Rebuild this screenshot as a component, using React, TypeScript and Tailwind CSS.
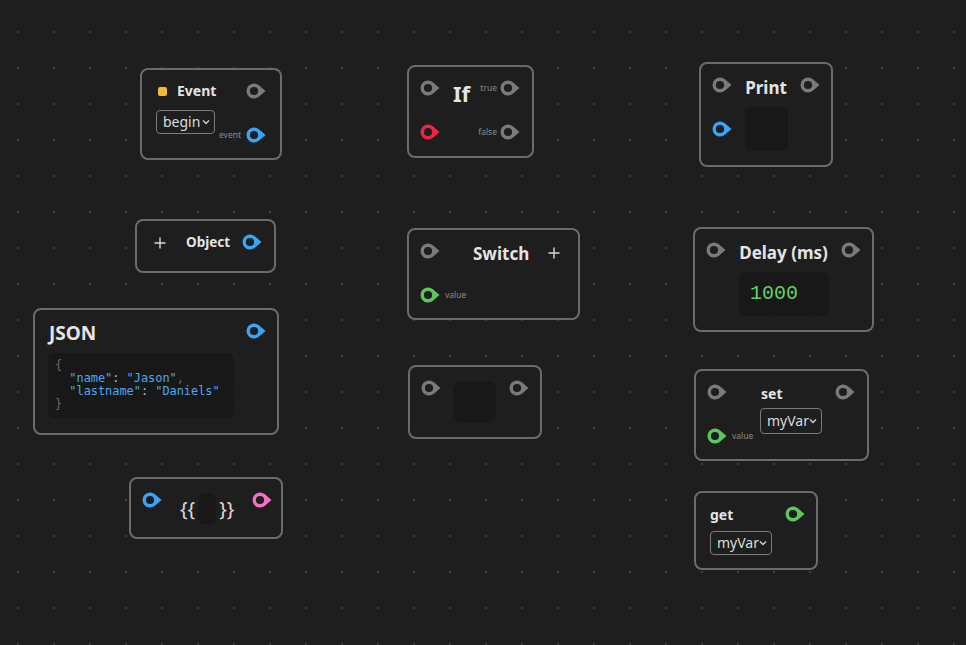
import React from "react";

const GREY = "#7a7a7a";
const BLUE = "#36a6f6";
const RED = "#f1234b";
const GREEN = "#5cc85c";
const PINK = "#f472c4";

const Port = ({ c }: { c: string }) => (
  <svg width="20" height="16" viewBox="0 0 20 16" className="block shrink-0">
    <path
      fillRule="evenodd"
      fill={c}
      d="M19.5 8 L12.9 2.3 A7.5 7.5 0 1 0 12.9 13.7 Z M8 3.9 A4.1 4.1 0 1 1 8 12.1 A4.1 4.1 0 1 1 8 3.9 Z"
    />
  </svg>
);

const Plus = () => (
  <svg width="12" height="12" viewBox="0 0 12 12" className="block shrink-0">
    <path d="M6 0.5 V11.5 M0.5 6 H11.5" stroke="#d8d8d8" strokeWidth="1.4" />
  </svg>
);

const Chevron = () => (
  <svg width="8" height="6" viewBox="0 0 8 6" className="block shrink-0">
    <path d="M1 1.5 L4 4.5 L7 1.5" stroke="#d0d0d0" strokeWidth="1.4" fill="none" />
  </svg>
);

const Select = ({ label, w, h }: { label: string; w: string; h: string }) => (
  <div
    className={`flex items-center justify-between rounded-[4px] border-[1.5px] border-[#7a7a7a] pl-[6px] pr-[4px] text-[14px] text-[#dcdcdc] ${w} ${h}`}
  >
    <span className="leading-none">{label}</span>
    <Chevron />
  </div>
);

const Label = ({ t }: { t: string }) => (
  <span className="text-[8.5px] leading-none text-[#8a8a8a]">{t}</span>
);

const node =
  "absolute box-border rounded-[8px] border-2 border-[#6b6b6b] bg-[#1e1e1e]/70";

export default function App() {
  return (
    <div
      className="relative h-[645px] w-[966px] overflow-hidden bg-[#1e1e1e] bg-[radial-gradient(circle,#3d3d3d_1px,transparent_1.6px)] bg-[size:36px_36px] bg-[position:0px_14px] text-[#e4e4e4]"
      style={{ fontFamily: '"Noto Sans", "Open Sans", sans-serif' }}
    >
      {/* Event */}
      <div className={`${node} left-[140px] top-[68px] h-[92px] w-[142px] px-[14px] pt-[12px]`}>
        <div className="flex h-[18px] items-center justify-between">
          <div className="flex items-center">
            <div className="ml-[2px] h-[9px] w-[9px] rounded-[2px] bg-[#f8b932]" />
            <span className="ml-[10px] text-[14px] font-bold leading-none">Event</span>
          </div>
          <Port c={GREY} />
        </div>
        <div className="mt-[10px] flex items-start justify-between">
          <Select label="begin" w="w-[59px]" h="h-[24px]" />
          <div className="mt-[17px] flex items-center gap-[5px]">
            <Label t="event" />
            <Port c={BLUE} />
          </div>
        </div>
      </div>

      {/* If */}
      <div className={`${node} left-[407px] top-[65px] h-[93px] w-[127px] pl-[11px] pr-[12px] pt-[13px]`}>
        <div className="flex h-[16px] items-center justify-between">
          <div className="flex items-center">
            <Port c={GREY} />
            <span className="ml-[13px] mt-[9px] text-[22px] font-bold leading-none">If</span>
          </div>
          <div className="flex items-center gap-[3px]">
            <Label t="true" />
            <Port c={GREY} />
          </div>
        </div>
        <div className="mt-[28px] flex h-[16px] items-center justify-between">
          <Port c={RED} />
          <div className="flex items-center gap-[3px]">
            <Label t="false" />
            <Port c={GREY} />
          </div>
        </div>
      </div>

      {/* Print */}
      <div className={`${node} left-[699px] top-[62px] h-[105px] w-[134px] pl-[11px] pr-[11px] pt-[13px]`}>
        <div className="flex h-[16px] items-center justify-between">
          <Port c={GREY} />
          <span className="mt-[4px] text-[17px] font-bold leading-none">Print</span>
          <Port c={GREY} />
        </div>
        <div className="mt-[14px] flex items-center">
          <Port c={BLUE} />
          <div className="ml-[13px] h-[44px] w-[43px] rounded-[6px] bg-[#181818]" />
        </div>
      </div>

      {/* Object */}
      <div className={`${node} left-[135px] top-[219px] h-[54px] w-[141px] pl-[17px] pt-[13px]`}>
        <div className="flex h-[16px] items-center">
          <div className="mt-[2px]">
            <Plus />
          </div>
          <span className="ml-[20px] mt-[2px] text-[13.5px] font-bold leading-none">Object</span>
          <div className="ml-[12px]">
            <Port c={BLUE} />
          </div>
        </div>
      </div>

      {/* Switch */}
      <div className={`${node} left-[407px] top-[228px] h-[92px] w-[173px] pl-[11px] pt-[13px]`}>
        <div className="flex h-[16px] items-center">
          <Port c={GREY} />
          <span className="ml-[33px] mt-[5px] text-[17px] font-bold leading-none">Switch</span>
          <div className="ml-[19px] mt-[4px]">
            <Plus />
          </div>
        </div>
        <div className="mt-[28px] flex h-[16px] items-center gap-[5px]">
          <Port c={GREEN} />
          <Label t="value" />
        </div>
      </div>

      {/* Delay */}
      <div className={`${node} left-[693px] top-[227px] h-[105px] w-[181px] pl-[11px] pr-[11px] pt-[13px]`}>
        <div className="flex h-[16px] items-center justify-between">
          <Port c={GREY} />
          <span className="mt-[5px] text-[17px] font-bold leading-none">Delay (ms)</span>
          <Port c={GREY} />
        </div>
        <div
          className="ml-[33px] mt-[14px] flex h-[44px] w-[90px] items-center rounded-[6px] bg-[#181818] pl-[11px] text-[20px] text-[#62d362]"
          style={{ fontFamily: '"Liberation Mono", "DejaVu Sans Mono", monospace' }}
        >
          1000
        </div>
      </div>

      {/* JSON */}
      <div className={`${node} left-[33px] top-[308px] h-[127px] w-[246px] pl-[13px] pr-[11px] pt-[13px]`}>
        <div className="flex h-[16px] items-center justify-between">
          <span className="ml-[1px] mt-[5px] text-[19px] font-bold leading-none">JSON</span>
          <Port c={BLUE} />
        </div>
        <div
          className="mt-[14px] h-[65px] w-[186px] rounded-[6px] bg-[#181818] pl-[7px] pt-[6px] text-[11.9px] leading-[13px] whitespace-pre"
          style={{ fontFamily: '"DejaVu Sans Mono", "Liberation Mono", monospace' }}
        >
          <div className="text-[#6a6a6a]">{"{"}</div>
          <div>
            <span className="text-[#4aa8f2]">{'  "name"'}</span>
            <span className="text-[#a9c6e2]">{": "}</span>
            <span className="text-[#4aa8f2]">{'"Jason"'}</span>
            <span className="text-[#6a6a6a]">,</span>
          </div>
          <div>
            <span className="text-[#4aa8f2]">{'  "lastname"'}</span>
            <span className="text-[#a9c6e2]">{": "}</span>
            <span className="text-[#4aa8f2]">{'"Daniels"'}</span>
          </div>
          <div className="text-[#6a6a6a]">{"}"}</div>
        </div>
      </div>

      {/* Empty */}
      <div className={`${node} left-[408px] top-[365px] h-[74px] w-[134px] pl-[11px] pt-[13px]`}>
        <div className="flex items-start">
          <Port c={GREY} />
          <div className="ml-[13px] mt-[1px] h-[42px] w-[42px] rounded-[8px] bg-[#181818]" />
          <div className="ml-[13px]">
            <Port c={GREY} />
          </div>
        </div>
      </div>

      {/* set */}
      <div className={`${node} left-[694px] top-[369px] h-[92px] w-[175px] pl-[11px] pr-[12px] pt-[13px]`}>
        <div className="flex items-start">
          <div className="flex h-[60px] w-[53px] flex-col justify-between">
            <Port c={GREY} />
            <div className="flex items-center gap-[5px]">
              <Port c={GREEN} />
              <Label t="value" />
            </div>
          </div>
          <div className="flex flex-col items-start">
            <span className="mt-[2px] pl-[1px] text-[14px] font-bold leading-[16px]">set</span>
            <div className="mt-[6px]">
              <Select label="myVar" w="w-[62px]" h="h-[26px]" />
            </div>
          </div>
          <div className="ml-auto">
            <Port c={GREY} />
          </div>
        </div>
      </div>

      {/* Template */}
      <div className={`${node} left-[129px] top-[477px] h-[62px] w-[154px] pl-[11px] pt-[13px]`}>
        <div className="flex items-start">
          <Port c={BLUE} />
          <div className="ml-[18px] mt-[1px] flex items-center text-[20px] leading-none text-[#d8d8d8]">
            <span>{"{{"}</span>
            <div className="mx-[3px] h-[31px] w-[18px] rounded-[6px] bg-[#181818]" />
            <span>{"}}"}</span>
          </div>
          <div className="ml-[18px]">
            <Port c={PINK} />
          </div>
        </div>
      </div>

      {/* get */}
      <div className={`${node} left-[694px] top-[491px] h-[79px] w-[124px] pl-[14px] pr-[11px] pt-[13px]`}>
        <div className="flex h-[16px] items-center justify-between">
          <span className="mt-[2px] text-[14px] font-bold leading-none">get</span>
          <Port c={GREEN} />
        </div>
        <div className="mt-[9px]">
          <Select label="myVar" w="w-[62px]" h="h-[24px]" />
        </div>
      </div>
    </div>
  );
}
